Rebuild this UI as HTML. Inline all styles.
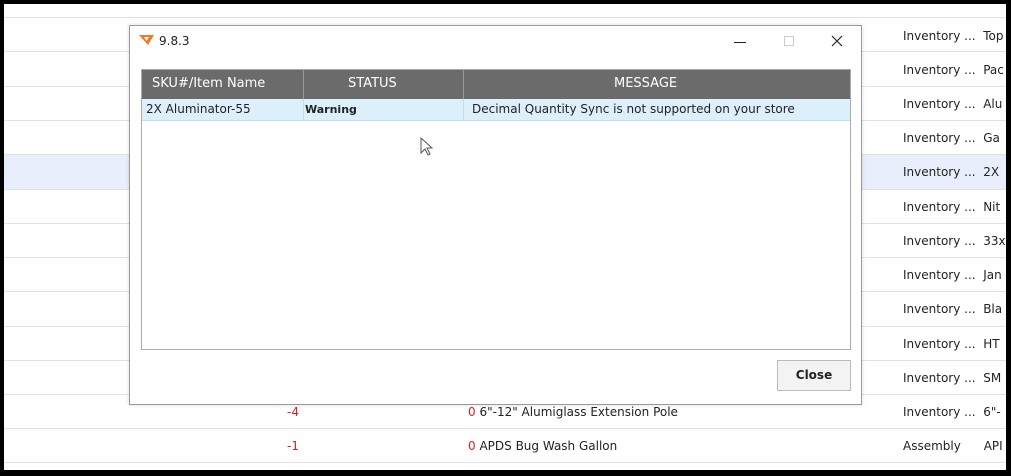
<!DOCTYPE html>
<html><head><style>
*{margin:0;padding:0;box-sizing:border-box}
body{width:1011px;height:476px;background:#000;position:relative;overflow:hidden;font-family:"DejaVu Sans","Liberation Sans",sans-serif;font-size:12px;color:#222}
#bg{position:absolute;left:4px;top:4px;width:1002px;height:466px;background:#fff;overflow:hidden}
.line{position:absolute;left:0;width:1002px;height:1px;background:#e2e2e2}
.t{position:absolute;white-space:nowrap}
.red{color:#e02020}
#dlg{position:absolute;left:129px;top:25px;width:733px;height:380px;background:#fff;border:1px solid #9a9a9a;box-shadow:0 0 4px rgba(0,0,0,.15)}
</style></head><body>
<div id="bg">
<div style="position:absolute;left:0;top:151px;width:1002px;height:34px;background:#e8eefc"></div>
<div class="line" style="top:13px"></div>
<div class="line" style="top:47px"></div>
<div class="line" style="top:82px"></div>
<div class="line" style="top:116px"></div>
<div class="line" style="top:150px"></div>
<div class="line" style="top:185px"></div>
<div class="line" style="top:219px"></div>
<div class="line" style="top:253px"></div>
<div class="line" style="top:287px"></div>
<div class="line" style="top:322px"></div>
<div class="line" style="top:356px"></div>
<div class="line" style="top:390px"></div>
<div class="line" style="top:424px"></div>
<div class="line" style="top:458px"></div>
<div class="t" style="left:899px;top:25px">Inventory ...&nbsp; Top</div>
<div class="t" style="left:899px;top:59px">Inventory ...&nbsp; Pac</div>
<div class="t" style="left:899px;top:93px">Inventory ...&nbsp; Alu</div>
<div class="t" style="left:899px;top:127px">Inventory ...&nbsp; Ga</div>
<div class="t" style="left:899px;top:161px">Inventory ...&nbsp; 2X</div>
<div class="t" style="left:899px;top:196px">Inventory ...&nbsp; Nit</div>
<div class="t" style="left:899px;top:230px">Inventory ...&nbsp; 33x</div>
<div class="t" style="left:899px;top:264px">Inventory ...&nbsp; Jan</div>
<div class="t" style="left:899px;top:298px">Inventory ...&nbsp; Bla</div>
<div class="t" style="left:899px;top:333px">Inventory ...&nbsp; HT</div>
<div class="t" style="left:899px;top:367px">Inventory ...&nbsp; SM</div>
<div class="t" style="left:899px;top:401px">Inventory ...&nbsp; 6"-</div>
<div class="t" style="left:899px;top:435px">Assembly&nbsp;&nbsp;&nbsp;&nbsp;&nbsp; API</div>
<div class="t red" style="left:283px;top:401px">-4</div>
<div class="t red" style="left:283px;top:435px">-1</div>
<div class="t" style="left:464px;top:401px"><span class="red">0</span> 6"-12" Alumiglass Extension Pole</div>
<div class="t" style="left:464px;top:435px"><span class="red">0</span> APDS Bug Wash Gallon</div>
</div>
<div id="dlg">
<svg style="position:absolute;left:9px;top:8px" width="16" height="12" viewBox="0 0 16 12"><path d="M0 1h15l-6 10z" fill="#f07a1e"/><path d="M5 3h5l-2.5 4z" fill="#fff"/></svg>
<div class="t" style="left:29px;top:8px;font-size:12px">9.8.3</div>
<div style="position:absolute;left:604px;top:16px;width:12px;height:1px;background:#222"></div>
<div style="position:absolute;left:654px;top:10px;width:10px;height:10px;border:1px solid #ccc"></div>
<svg style="position:absolute;left:701px;top:9px" width="12" height="12"><path d="M1 1L11 11M11 1L1 11" stroke="#222" stroke-width="1.2"/></svg>
<div style="position:absolute;left:11px;top:43px;width:710px;height:281px;border:1px solid #aaa;background:#fff">
<div style="position:absolute;left:0;top:0;width:708px;height:29px;background:#6b6b6b;color:#fff;font-size:13px">
<div class="t" style="left:10px;top:6px">SKU#/Item Name</div>
<div class="t" style="left:206px;top:6px">STATUS</div>
<div class="t" style="left:472px;top:6px">MESSAGE</div>
<div style="position:absolute;left:161px;top:0;width:1px;height:29px;background:#999"></div>
<div style="position:absolute;left:321px;top:0;width:1px;height:29px;background:#999"></div>
</div>
<div style="position:absolute;left:0;top:29px;width:708px;height:22px;background:#dcf0fb;border-bottom:1px solid #c8dbe6">
<div class="t" style="left:4px;top:3px">2X Aluminator-55</div>
<div class="t" style="left:163px;top:4px;font-weight:bold;font-size:11px">Warning</div>
<div class="t" style="left:330px;top:3px">Decimal Quantity Sync is not supported on your store</div>
<div style="position:absolute;left:161px;top:0;width:1px;height:22px;background:#c8dbe6"></div>
<div style="position:absolute;left:321px;top:0;width:1px;height:22px;background:#c8dbe6"></div>
</div>
</div>
<svg style="position:absolute;left:290px;top:111px" width="14" height="20"><path d="M1 1V16L5 12L8 18L10 17L7 11H12Z" fill="#fff" stroke="#555" stroke-width="1"/></svg>
<div style="position:absolute;left:647px;top:334px;width:74px;height:31px;background:#f3f3f3;border:1px solid #bbb;font-weight:bold;font-size:12px;text-align:center;line-height:29px">Close</div>
</div>
</body></html>
